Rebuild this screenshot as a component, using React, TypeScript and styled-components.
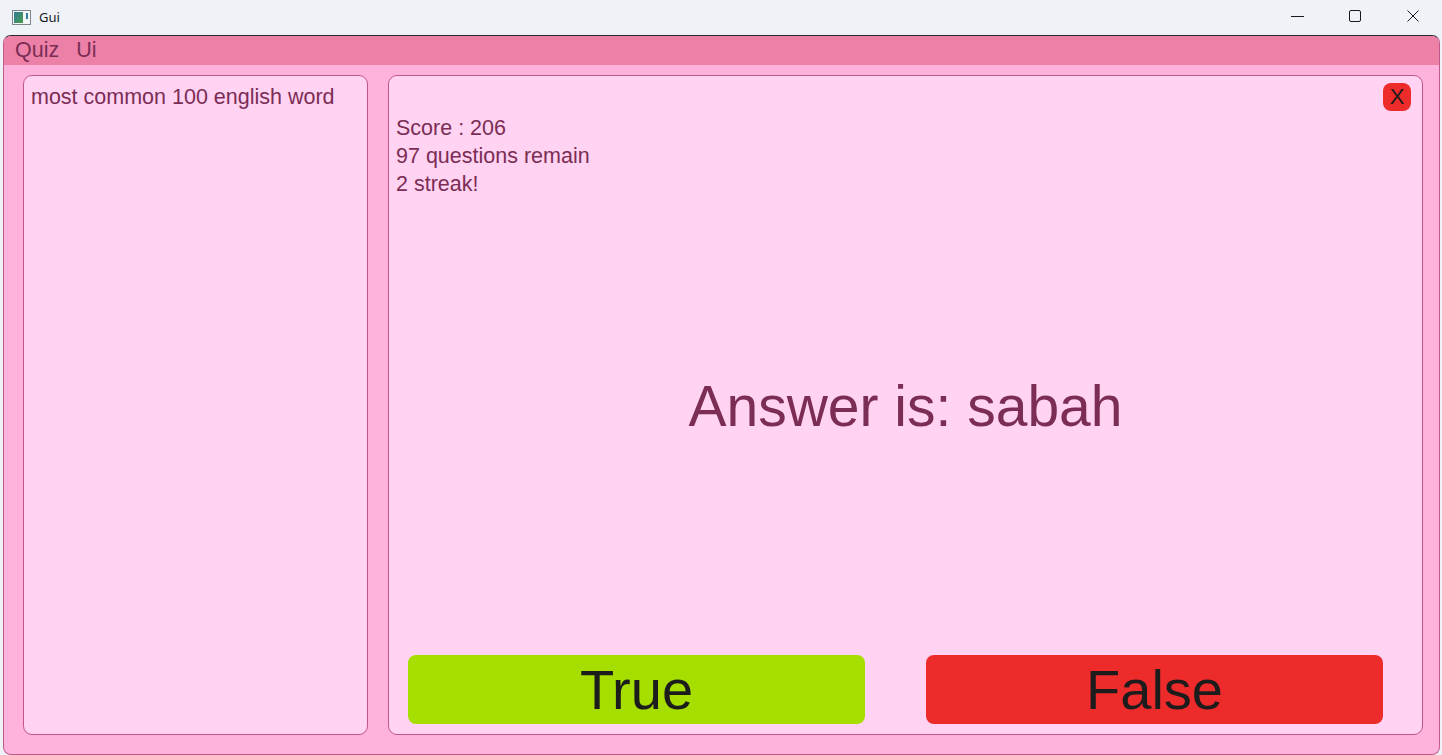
import React from "react";
import styled, { createGlobalStyle } from "styled-components";

const GlobalStyle = createGlobalStyle`
  html, body {
    margin: 0;
    padding: 0;
    background: #eef1f6;
    font-family: "Liberation Sans", Arial, sans-serif;
    overflow: hidden;
  }
  * { box-sizing: border-box; }
`;

const Frame = styled.div`
  width: 1442px;
  height: 755px;
  display: flex;
  flex-direction: column;
  background: #eef1f6;
`;

const TitleBar = styled.div`
  height: 35px;
  flex: none;
  display: flex;
  align-items: center;
  padding-left: 12px;
  background: #eff2f7;
`;

const TitleText = styled.span`
  margin-left: 8px;
  font-family: "Noto Sans", "Liberation Sans", sans-serif;
  font-size: 13px;
  color: #1a1a1a;
  padding-bottom: 2px;
`;

const Spacer = styled.div`
  flex: 1;
`;

const WinButton = styled.div`
  width: 58px;
  height: 35px;
  display: flex;
  align-items: center;
  justify-content: center;
  color: #1a1a1a;
  padding-bottom: 3px;
`;

const AppWindow = styled.div`
  flex: 1;
  margin: 0 2px 0 3px;
  border: 1px solid #c05a8c;
  border-top: 1px solid #2a2a2a;
  border-radius: 8px;
  background: #ffb3dc;
  display: flex;
  flex-direction: column;
  overflow: hidden;
`;

const MenuBar = styled.div`
  height: 29px;
  flex: none;
  background: #ec80a7;
  display: flex;
  align-items: center;
  gap: 17px;
  padding-left: 11px;
`;

const MenuItem = styled.span`
  font-size: 21.5px;
  color: #7b2d55;
`;

const Body = styled.div`
  flex: 1;
  display: flex;
  gap: 20px;
  padding: 10px 16px 19px 19px;
  min-height: 0;
`;

const Panel = styled.div<{ $width?: number }>`
  ${(p) => (p.$width ? `width: ${p.$width}px; flex: none;` : `flex: 1;`)}
  background: #ffd3f1;
  border: 1px solid #c0568a;
  border-radius: 9px;
  display: flex;
  flex-direction: column;
  min-width: 0;
`;

const SideText = styled.div`
  padding: 8px 7px;
  font-size: 21.5px;
  line-height: 26px;
  color: #7b2d55;
`;

const HeaderRow = styled.div`
  display: flex;
  justify-content: flex-end;
  padding: 7px 11px 0 0;
`;

const CloseButton = styled.button`
  width: 28px;
  height: 28px;
  border: none;
  border-radius: 8px;
  background: #ee2b2b;
  color: #1a1a1a;
  font-family: "Liberation Sans", Arial, sans-serif;
  font-size: 22px;
  line-height: 28px;
  padding: 0;
  display: flex;
  align-items: center;
  justify-content: center;
`;

const Stats = styled.div`
  margin-top: 3px;
  padding-left: 7px;
  font-size: 21.5px;
  line-height: 28px;
  color: #7b2d55;
`;

const AnswerArea = styled.div`
  flex: 1;
  display: flex;
  align-items: center;
  justify-content: center;
  padding-bottom: 40px;
`;

const Answer = styled.div`
  font-size: 57px;
  line-height: 1.15;
  color: #7b2d55;
`;

const ButtonRow = styled.div`
  display: flex;
  gap: 61px;
  padding: 0 39px 10px 19px;
`;

const ChoiceButton = styled.button<{ $bg: string }>`
  flex: 1;
  height: 69px;
  border: none;
  border-radius: 8px;
  background: ${(p) => p.$bg};
  color: #1c1c1c;
  font-family: "Liberation Sans", Arial, sans-serif;
  font-size: 56px;
  padding: 0;
  display: flex;
  align-items: center;
  justify-content: center;
`;

const AppIcon = () => (
  <svg width="19" height="15" viewBox="0 0 19 15">
    <defs>
      <linearGradient id="g" x1="0" y1="0" x2="1" y2="1">
        <stop offset="0" stopColor="#2f7f9e" />
        <stop offset="1" stopColor="#4a9a4a" />
      </linearGradient>
    </defs>
    <rect x="0.5" y="0.5" width="18" height="14" fill="#f4f6f8" stroke="#7d858f" />
    <rect x="2" y="2" width="9" height="11" fill="url(#g)" />
    <rect x="14" y="3" width="2" height="6" fill="#2f7f9e" />
  </svg>
);

export default function App() {
  return (
    <>
      <GlobalStyle />
      <Frame>
        <TitleBar>
          <AppIcon />
          <TitleText>Gui</TitleText>
          <Spacer />
          <WinButton>
            <svg width="14" height="14" viewBox="0 0 14 14">
              <line x1="1" y1="7.5" x2="14" y2="7.5" stroke="#1a1a1a" strokeWidth="1" />
            </svg>
          </WinButton>
          <WinButton>
            <svg width="14" height="14" viewBox="0 0 14 14">
              <rect x="1.5" y="1.5" width="11" height="11" rx="1.5" fill="none" stroke="#1a1a1a" strokeWidth="1" />
            </svg>
          </WinButton>
          <WinButton>
            <svg width="14" height="14" viewBox="0 0 14 14">
              <path d="M1.5 1.5 L12.5 12.5 M12.5 1.5 L1.5 12.5" stroke="#1a1a1a" strokeWidth="1" />
            </svg>
          </WinButton>
        </TitleBar>
        <AppWindow>
          <MenuBar>
            <MenuItem>Quiz</MenuItem>
            <MenuItem>Ui</MenuItem>
          </MenuBar>
          <Body>
            <Panel $width={345}>
              <SideText>most common 100 english word</SideText>
            </Panel>
            <Panel>
              <HeaderRow>
                <CloseButton>X</CloseButton>
              </HeaderRow>
              <Stats>
                <div>Score : 206</div>
                <div>97 questions remain</div>
                <div>2 streak!</div>
              </Stats>
              <AnswerArea>
                <Answer>Answer is: sabah</Answer>
              </AnswerArea>
              <ButtonRow>
                <ChoiceButton $bg="#a6de00">True</ChoiceButton>
                <ChoiceButton $bg="#ee2b2b">False</ChoiceButton>
              </ButtonRow>
            </Panel>
          </Body>
        </AppWindow>
      </Frame>
    </>
  );
}
